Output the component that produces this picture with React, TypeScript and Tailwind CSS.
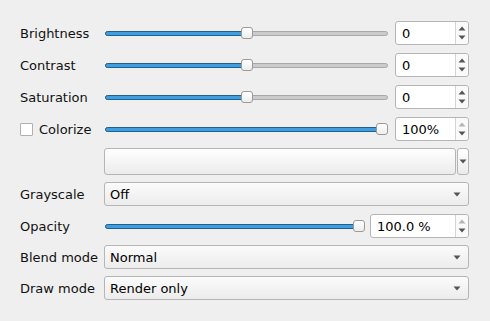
import React from "react";

const Arrow = ({ light = false }: { light?: boolean }) => (
  <svg width="8" height="5" viewBox="0 0 8 5" className="block">
    <path d="M0.5 0.5 L7.5 0.5 L4 4.5 Z" fill={light ? "#b4b4b4" : "#555555"} />
  </svg>
);

const UpArrow = ({ light = false }: { light?: boolean }) => (
  <svg width="8" height="5" viewBox="0 0 8 5" className="block">
    <path d="M0.5 4.5 L7.5 4.5 L4 0.5 Z" fill={light ? "#b4b4b4" : "#555555"} />
  </svg>
);

function Slider({ frac }: { frac: number }) {
  return (
    <div className="relative flex-1 h-[24px] flex items-center">
      <div className="relative w-full h-[5px] rounded-[3px] border border-[#a8a8a8] bg-[#cbcbcb]">
        <div
          className="absolute left-[-1px] top-[-1px] bottom-[-1px] rounded-[3px] border border-[#235f8f] bg-[#3e9ee0]"
          style={{ width: `calc(${frac * 100}% + 2px)` }}
        />
      </div>
      <div
        className="absolute top-[6px] w-[12px] h-[12px] rounded-[3px] border border-[#9a9a9a] bg-gradient-to-b from-white to-[#ededed]"
        style={{ left: `calc((100% - 12px) * ${frac})` }}
      />
    </div>
  );
}

function Spin({ value, upLight = false, w }: { value: string; upLight?: boolean; w: string }) {
  return (
    <div className={`${w} h-[24px] flex rounded-[3px] border border-[#b5b5b5] bg-white`}>
      <div className="flex-1 flex items-center pl-[6px] pt-[1px] text-[13px] text-black">{value}</div>
      <div className="w-[13px] border-l border-[#d4d4d4] flex flex-col items-center justify-center gap-[4px] bg-[#fafafa] rounded-r-[3px]">
        <UpArrow light={upLight} />
        <Arrow />
      </div>
    </div>
  );
}

function Combo({ text }: { text: string }) {
  return (
    <div className="flex-1 h-[24px] flex items-center rounded-[3px] border border-[#b5b5b5] bg-gradient-to-b from-[#fbfbfb] to-[#ececec] pl-[5px] pr-[7px]">
      <span className="flex-1 text-[13px] text-black pt-[1px]">{text}</span>
      <Arrow />
    </div>
  );
}

export default function App() {
  return (
    <div
      className="w-[490px] h-[321px] bg-[#efefef] pl-[20px] pr-[21px] pt-[21px] flex flex-col text-[13px] text-[#111]"
      style={{ fontFamily: '"DejaVu Sans", sans-serif' }}
    >
      <div className="flex items-center h-[24px]">
        <div className="w-[85px] pt-[1px]">Brightness</div>
        <Slider frac={0.5} />
        <div className="w-[7px]" />
        <Spin value="0" w="w-[74px]" />
      </div>
      <div className="flex items-center h-[24px] mt-[8px]">
        <div className="w-[85px] pt-[1px]">Contrast</div>
        <Slider frac={0.5} />
        <div className="w-[7px]" />
        <Spin value="0" w="w-[74px]" />
      </div>
      <div className="flex items-center h-[24px] mt-[8px]">
        <div className="w-[85px] pt-[1px]">Saturation</div>
        <Slider frac={0.5} />
        <div className="w-[7px]" />
        <Spin value="0" w="w-[74px]" />
      </div>
      <div className="flex items-center h-[24px] mt-[8px]">
        <div className="w-[85px] flex items-center">
          <div className="w-[13px] h-[13px] border border-[#b0b0b0] bg-white rounded-[1px]" />
          <span className="ml-[6px] pt-[1px]">Colorize</span>
        </div>
        <Slider frac={1} />
        <div className="w-[7px]" />
        <Spin value="100%" upLight w="w-[74px]" />
      </div>
      <div className="flex items-center h-[27px] mt-[7px]">
        <div className="w-[84px]" />
        <div className="flex-1 h-[27px] rounded-[3px] border border-[#b5b5b5] bg-gradient-to-b from-white to-[#ebebeb]" />
        <div className="w-[1px]" />
        <div className="w-[12px] h-[27px] rounded-[3px] border border-[#b5b5b5] bg-gradient-to-b from-white to-[#ebebeb] flex items-center justify-center">
          <Arrow />
        </div>
      </div>
      <div className="flex items-center h-[24px] mt-[7px]">
        <div className="w-[84px] pt-[1px]">Grayscale</div>
        <Combo text="Off" />
      </div>
      <div className="flex items-center h-[24px] mt-[8px]">
        <div className="w-[85px] pt-[1px]">Opacity</div>
        <Slider frac={1} />
        <div className="w-[5px]" />
        <Spin value="100.0 %" upLight w="w-[99px]" />
      </div>
      <div className="flex items-center h-[24px] mt-[7px]">
        <div className="w-[84px] pt-[1px]">Blend mode</div>
        <Combo text="Normal" />
      </div>
      <div className="flex items-center h-[24px] mt-[7px]">
        <div className="w-[84px] pt-[1px]">Draw mode</div>
        <Combo text="Render only" />
      </div>
    </div>
  );
}
